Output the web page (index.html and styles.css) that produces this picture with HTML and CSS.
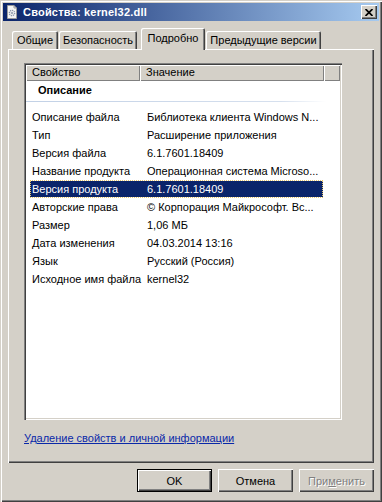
FILE: index.html
```html
<!DOCTYPE html>
<html lang="ru">
<head>
    <meta charset="UTF-8">
    <meta name="viewport" content="width=device-width, initial-scale=1.0">
    <title>Свойства: kernel32.dll</title>
    <link rel="stylesheet" href="styles.css">
</head>
<body>
    <div class="window">
        <header class="titlebar">
            <svg class="title-icon" width="12" height="14" viewBox="0 0 12 14">
                <path d="M1.5 0.5 H8 L10.5 3 V13.5 H1.5 Z" fill="#f4f4f4" stroke="#9a9a9a"/>
                <path d="M8 0.5 V3 H10.5" fill="none" stroke="#9a9a9a"/>
                <circle cx="6" cy="8" r="2.6" fill="none" stroke="#8a96a8" stroke-width="1.4" stroke-dasharray="1.2 0.8"/>
                <circle cx="6" cy="8" r="1" fill="#8a96a8"/>
            </svg>
            <span class="title-text">Свойства: kernel32.dll</span>
            <button class="close-button">
                <svg width="8" height="7" viewBox="0 0 8 7">
                    <path d="M0.5 0 L7.5 7 M7.5 0 L0.5 7" stroke="#000" stroke-width="1.7"/>
                </svg>
            </button>
        </header>

        <div class="content">
            <div class="tabs">
                <div class="tab tab-general">Общие</div>
                <div class="tab tab-security">Безопасность</div>
                <div class="tab tab-details active">Подробно</div>
                <div class="tab tab-previous">Предыдущие версии</div>
            </div>

            <div class="panel">
                <div class="listview">
                    <div class="list-header">
                        <div class="col-head col-name">Свойство</div>
                        <div class="col-head col-value">Значение</div>
                        <div class="col-head col-fill"></div>
                    </div>
                    <div class="list-body">
                        <div class="group-title">Описание</div>
                        <div class="group-line"></div>
                        <div class="rows">
                            <div class="row"><span class="cell-name">Описание файла</span><span class="cell-value">Библиотека клиента Windows N...</span></div>
                            <div class="row"><span class="cell-name">Тип</span><span class="cell-value">Расширение приложения</span></div>
                            <div class="row"><span class="cell-name">Версия файла</span><span class="cell-value">6.1.7601.18409</span></div>
                            <div class="row"><span class="cell-name">Название продукта</span><span class="cell-value">Операционная система Microso...</span></div>
                            <div class="row selected"><span class="cell-name">Версия продукта</span><span class="cell-value">6.1.7601.18409</span></div>
                            <div class="row"><span class="cell-name">Авторские права</span><span class="cell-value">© Корпорация Майкрософт. Вс...</span></div>
                            <div class="row"><span class="cell-name">Размер</span><span class="cell-value">1,06 МБ</span></div>
                            <div class="row"><span class="cell-name">Дата изменения</span><span class="cell-value">04.03.2014 13:16</span></div>
                            <div class="row"><span class="cell-name">Язык</span><span class="cell-value">Русский (Россия)</span></div>
                            <div class="row"><span class="cell-name">Исходное имя файла</span><span class="cell-value">kernel32</span></div>
                        </div>
                    </div>
                </div>
                <a class="remove-link" href="#">Удаление свойств и личной информации</a>
            </div>

            <div class="buttons">
                <button class="btn default">OK</button>
                <button class="btn">Отмена</button>
                <button class="btn disabled">При<u>м</u>енить</button>
            </div>
        </div>
    </div>
</body>
</html>
```

FILE: styles.css
```css
:root {
    --face: #D4D0C8;
    --light: #FFFFFF;
    --shadow: #808080;
    --dark: #404040;
    --select: #0A246A;
    --link: #0A28A8;
}

* {
    box-sizing: border-box;
    margin: 0;
    padding: 0;
}

body {
    background-color: var(--face);
    font-family: 'Liberation Sans', Arial, sans-serif;
    font-size: 11px;
    color: #000;
}

.window {
    width: 382px;
    height: 502px;
    padding: 3px;
    background-color: var(--face);
    display: flex;
    flex-direction: column;
    box-shadow: inset 1px 1px var(--face), inset 2px 2px var(--light),
                inset -1px -1px var(--dark), inset -2px -2px var(--shadow);
}

/* Title bar */
.titlebar {
    height: 18px;
    display: flex;
    align-items: center;
    padding: 0 2px 0 3px;
    background: linear-gradient(to right, #0A246A, #A6CAF0);
}

.title-icon {
    flex-shrink: 0;
}

.title-text {
    flex: 1;
    margin-left: 5px;
    color: var(--light);
    font-weight: bold;
    letter-spacing: 0.2px;
    white-space: nowrap;
}

.close-button {
    width: 16px;
    height: 14px;
    border: none;
    background: var(--face);
    display: flex;
    align-items: center;
    justify-content: center;
    box-shadow: inset 1px 1px var(--light), inset -1px -1px var(--dark), inset -2px -2px var(--shadow);
}

.content {
    flex: 1;
    padding: 7px 5px 0 5px;
    display: flex;
    flex-direction: column;
}

/* Tabs */
.tabs {
    height: 21px;
    display: flex;
    align-items: flex-end;
    padding-left: 4px;
}

.tab {
    height: 18px;
    line-height: 19px;
    text-align: center;
    margin-right: 1px;
    background: var(--face);
    border-radius: 2px 2px 0 0;
    white-space: nowrap;
    box-shadow: inset 1px 1px var(--light), inset -1px 0 var(--dark), inset -2px 0 var(--shadow);
}

.tab-general {
    width: 46px;
}

.tab-security {
    width: 78px;
}

.tab-details {
    width: 64px;
    margin-left: 3px;
}

.tab-previous {
    width: 115px;
}

.tab.active {
    position: relative;
    z-index: 1;
    height: 22px;
    line-height: 20px;
    margin-bottom: -1px;
}

.panel {
    height: 414px;
    padding: 14px 0 0 16px;
    display: flex;
    flex-direction: column;
    box-shadow: inset 1px 1px var(--light), inset -1px -1px var(--dark), inset -2px -2px var(--shadow);
}

/* List view */
.listview {
    width: 318px;
    height: 357px;
    padding: 2px;
    background: var(--light);
    box-shadow: inset 1px 1px var(--shadow), inset 2px 2px var(--dark),
                inset -1px -1px var(--light), inset -2px -2px var(--face);
}

.list-header {
    display: flex;
    height: 16px;
}

.col-head {
    background: var(--face);
    line-height: 15px;
    padding-left: 6px;
    white-space: nowrap;
    box-shadow: inset 1px 1px var(--light), inset -1px -1px var(--shadow);
}

.col-name {
    width: 114px;
}

.col-value {
    width: 184px;
}

.col-fill {
    flex: 1;
}

.group-title {
    height: 20px;
    line-height: 19px;
    padding-left: 12px;
    font-weight: bold;
}

.group-line {
    height: 1px;
    margin-right: 14px;
    background: linear-gradient(to right, #C2D1E6, #D6E0EE 85%, #FFFFFF);
}

.rows {
    padding-top: 6px;
}

.row {
    display: flex;
    width: 293px;
    height: 18px;
    line-height: 16px;
    margin-left: 4px;
    padding: 1px 0;
    background-clip: content-box;
    white-space: nowrap;
}

.row.selected {
    background-color: var(--select);
    color: var(--light);
    outline: 1px dotted #E8C870;
    outline-offset: -1px;
}

.cell-name {
    width: 115px;
    padding-left: 2px;
    overflow: hidden;
}

.cell-value {
    flex: 1;
    padding-left: 2px;
    overflow: hidden;
}

.remove-link {
    margin-top: 12px;
    color: var(--link);
    text-decoration: underline;
    align-self: flex-start;
}

/* Dialog buttons */
.buttons {
    display: flex;
    justify-content: flex-end;
    gap: 6px;
    margin-top: 6px;
}

.btn {
    width: 75px;
    height: 23px;
    border: none;
    background: var(--face);
    font-family: inherit;
    font-size: 11px;
    color: #000;
    box-shadow: inset 1px 1px var(--light), inset -1px -1px var(--dark), inset -2px -2px var(--shadow);
}

.btn.default {
    box-shadow: inset 0 0 0 1px #000, inset 2px 2px var(--light),
                inset -2px -2px var(--dark), inset -3px -3px var(--shadow);
}

.btn.disabled {
    color: var(--shadow);
    text-shadow: 1px 1px var(--light);
}
```
